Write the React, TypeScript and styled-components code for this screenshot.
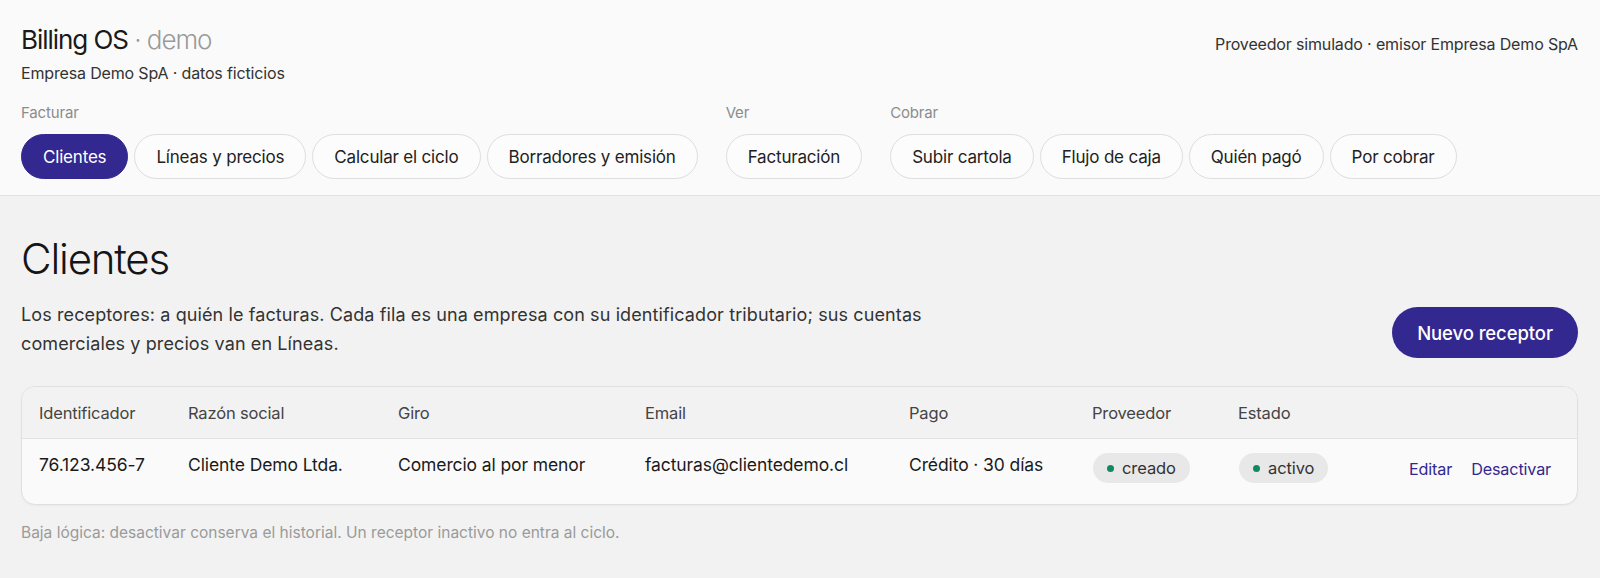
import { createGlobalStyle } from "styled-components";
import styled from "styled-components";

// #region ::: DATA
const NAV_GROUPS = [
  {
    label: "Facturar",
    items: ["Clientes", "Líneas y precios", "Calcular el ciclo", "Borradores y emisión"],
  },
  { label: "Ver", items: ["Facturación"] },
  {
    label: "Cobrar",
    items: ["Subir cartola", "Flujo de caja", "Quién pagó", "Por cobrar"],
  },
];

const COLUMNS = ["Identificador", "Razón social", "Giro", "Email", "Pago", "Proveedor", "Estado", ""];

const CLIENTS = [
  {
    id: "76.123.456-7",
    name: "Cliente Demo Ltda.",
    giro: "Comercio al por menor",
    email: "facturas@clientedemo.cl",
    pago: "Crédito · 30 días",
    proveedor: "creado",
    estado: "activo",
  },
];
// #endregion ::: DATA

const ACCENT = "#33288f";

const GlobalStyles = createGlobalStyle`
  html, body {
    margin: 0;
    padding: 0;
    background: #f2f2f2;
    font-family: Inter, "Noto Sans", sans-serif;
    color: #1c1c1c;
    -webkit-font-smoothing: antialiased;
  }
  * { box-sizing: border-box; }
`;

const Header = styled.header`
  background: #fafafa;
  border-bottom: 1px solid #e2e2e2;
  padding: 24px 22px 16px 21px;
`;

const TopRow = styled.div`
  display: flex;
  justify-content: space-between;
  align-items: flex-start;
`;

const Brand = styled.h1`
  margin: 0;
  font-size: 26px;
  font-weight: 400;
  letter-spacing: -0.04em;
  line-height: 32px;
  color: #1a1a1a;
`;

const BrandMuted = styled.span`
  font-weight: 300;
  color: #9a9a9a;
`;

const Sub = styled.div`
  margin-top: 7px;
  font-size: 16px;
  letter-spacing: -0.01em;
  color: #333;
`;

const Issuer = styled.div`
  margin-top: 10px;
  font-size: 16px;
  letter-spacing: -0.01em;
  color: #333;
`;

const Nav = styled.nav`
  display: flex;
  gap: 28px;
  margin-top: 21px;
`;

const NavGroup = styled.div`
  display: flex;
  flex-direction: column;
  gap: 12px;
`;

const GroupLabel = styled.div`
  font-size: 15px;
  letter-spacing: -0.01em;
  color: #8c8c8c;
  line-height: 18px;
`;

const PillRow = styled.div`
  display: flex;
  gap: 6px;
`;

const Pill = styled.button<{ $active?: boolean }>`
  height: 45px;
  padding: 0 21px;
  border-radius: 23px;
  font-family: inherit;
  font-size: 17px;
  letter-spacing: -0.011em;
  border: 1px solid ${(p) => (p.$active ? ACCENT : "#dedede")};
  background: ${(p) => (p.$active ? ACCENT : "#fcfcfc")};
  color: ${(p) => (p.$active ? "#fff" : "#222")};
  cursor: pointer;
`;

const Main = styled.main`
  padding: 37px 22px 0 21px;
`;

const Title = styled.h2`
  margin: 0;
  font-size: 42px;
  font-weight: 300;
  letter-spacing: -0.028em;
  line-height: 52px;
  color: #151515;
`;

const IntroRow = styled.div`
  display: flex;
  justify-content: space-between;
  align-items: flex-end;
  margin-top: 16px;
`;

const Intro = styled.p`
  margin: 0;
  max-width: 935px;
  font-size: 18px;
  line-height: 28.5px;
  letter-spacing: 0.006em;
  color: #333;
`;

const PrimaryButton = styled.button`
  height: 51px;
  padding: 0 25px;
  border: none;
  border-radius: 26px;
  background: ${ACCENT};
  color: #fff;
  font-family: inherit;
  font-size: 18.5px;
  font-weight: 500;
  letter-spacing: -0.005em;
  cursor: pointer;
`;

const TableCard = styled.div`
  margin-top: 28px;
  border: 1px solid #e0e0e0;
  border-radius: 14px;
  overflow: hidden;
  background: #fafafa;
  box-shadow: 0 1px 2px rgba(0, 0, 0, 0.04);
`;

const GRID = "149px 210px 247px 264px 183px 146px 1fr 190px";

const HeadRow = styled.div`
  display: grid;
  grid-template-columns: ${GRID};
  height: 52px;
  align-items: center;
  background: #f2f2f2;
  border-bottom: 1px solid #e2e2e2;
`;

const HeadCell = styled.div`
  padding-left: 17px;
  font-size: 16.5px;
  letter-spacing: -0.01em;
  color: #444;
`;

const BodyRow = styled.div`
  display: grid;
  grid-template-columns: ${GRID};
  height: 65px;
  align-items: start;
`;

const Cell = styled.div`
  display: flex;
  padding: 14px 0 0 17px;
  font-size: 17.5px;
  line-height: 24px;
  letter-spacing: -0.006em;
  color: #1a1a1a;
  white-space: nowrap;
`;

const Badge = styled.span`
  display: inline-flex;
  align-items: center;
  gap: 8px;
  height: 30px;
  margin-left: 1px;
  padding: 0 14px;
  border-radius: 15px;
  background: #e8e8e8;
  font-size: 16.5px;
  letter-spacing: -0.005em;
  color: #333;
`;

const Dot = styled.span`
  width: 7px;
  height: 7px;
  border-radius: 50%;
  background: #138a5e;
`;

const Actions = styled.div`
  display: flex;
  justify-content: flex-end;
  gap: 19px;
  padding: 18px 26px 0 0;
  line-height: 24px;
`;

const ActionLink = styled.a`
  font-size: 16.2px;
  letter-spacing: -0.01em;
  color: ${ACCENT};
  cursor: pointer;
`;

const Note = styled.p`
  margin: 18px 0 0;
  font-size: 15.5px;
  letter-spacing: 0;
  color: #9a9a9a;
`;

export default function App() {
  return (
    <>
      <GlobalStyles />
      <Header>
        <TopRow>
          <div>
            <Brand>
              Billing OS<BrandMuted> · demo</BrandMuted>
            </Brand>
            <Sub>Empresa Demo SpA · datos ficticios</Sub>
          </div>
          <Issuer>Proveedor simulado · emisor Empresa Demo SpA</Issuer>
        </TopRow>
        <Nav>
          {NAV_GROUPS.map((group) => (
            <NavGroup key={group.label}>
              <GroupLabel>{group.label}</GroupLabel>
              <PillRow>
                {group.items.map((item) => (
                  <Pill key={item} $active={item === "Clientes"}>
                    {item}
                  </Pill>
                ))}
              </PillRow>
            </NavGroup>
          ))}
        </Nav>
      </Header>

      <Main>
        <Title>Clientes</Title>
        <IntroRow>
          <Intro>
            Los receptores: a quién le facturas. Cada fila es una empresa con su identificador
            tributario; sus cuentas comerciales y precios van en Líneas.
          </Intro>
          <PrimaryButton>Nuevo receptor</PrimaryButton>
        </IntroRow>

        <TableCard>
          <HeadRow>
            {COLUMNS.map((col, i) => (
              <HeadCell key={i}>{col}</HeadCell>
            ))}
          </HeadRow>
          {CLIENTS.map((c) => (
            <BodyRow key={c.id}>
              <Cell>{c.id}</Cell>
              <Cell>{c.name}</Cell>
              <Cell>{c.giro}</Cell>
              <Cell>{c.email}</Cell>
              <Cell>{c.pago}</Cell>
              <Cell>
                <Badge>
                  <Dot />
                  {c.proveedor}
                </Badge>
              </Cell>
              <Cell>
                <Badge>
                  <Dot />
                  {c.estado}
                </Badge>
              </Cell>
              <Actions>
                <ActionLink>Editar</ActionLink>
                <ActionLink>Desactivar</ActionLink>
              </Actions>
            </BodyRow>
          ))}
        </TableCard>

        <Note>Baja lógica: desactivar conserva el historial. Un receptor inactivo no entra al ciclo.</Note>
      </Main>
    </>
  );
}
